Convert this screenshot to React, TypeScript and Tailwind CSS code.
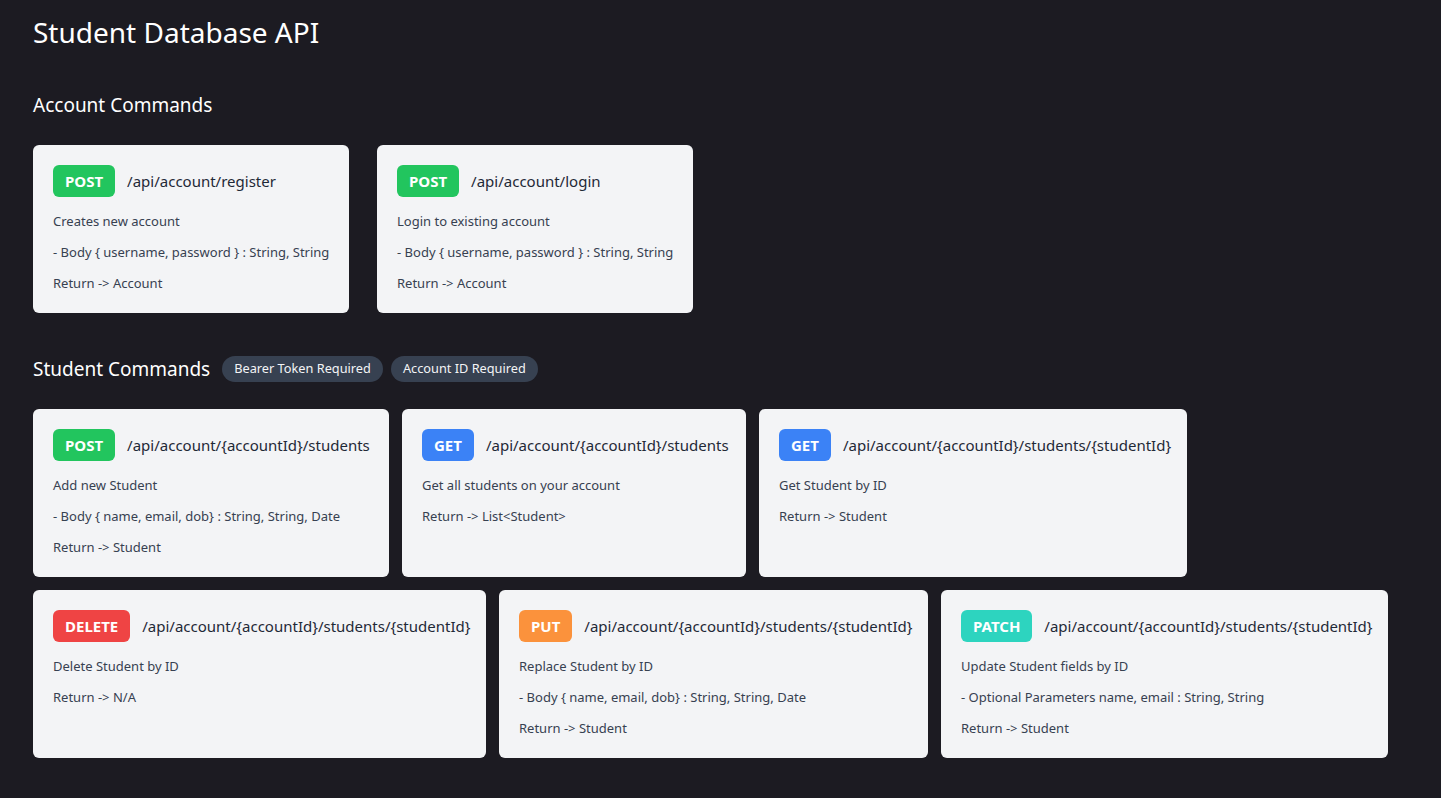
import React from "react";

type Card = {
  method: "POST" | "GET" | "DELETE" | "PUT" | "PATCH";
  path: string;
  lines: string[];
  w: string;
};

const badgeColor: Record<Card["method"], string> = {
  POST: "bg-[#22c55e]",
  GET: "bg-[#3b82f6]",
  DELETE: "bg-[#ef4444]",
  PUT: "bg-[#fb923c]",
  PATCH: "bg-[#2dd4bf]",
};

function ApiCard({ c }: { c: Card }) {
  return (
    <div className={`${c.w} rounded-md bg-[#f3f4f6] p-5 flex flex-col`}>
      <div className="flex items-center gap-3 h-8">
        <span
          className={`${badgeColor[c.method]} h-8 px-3 rounded-md flex items-center text-white font-bold text-[15px]`}
        >
          {c.method}
        </span>
        <span className="text-[15px] text-[#1f2937] whitespace-nowrap">{c.path}</span>
      </div>
      <div className="mt-[14px] flex flex-col gap-[11px]">
        {c.lines.map((l, i) => (
          <p key={i} className="text-[13px] leading-5 text-[#374151] whitespace-nowrap">
            {l}
          </p>
        ))}
      </div>
    </div>
  );
}

const account: Card[] = [
  {
    method: "POST",
    path: "/api/account/register",
    lines: ["Creates new account", "- Body { username, password } : String, String", "Return -> Account"],
    w: "w-[316px]",
  },
  {
    method: "POST",
    path: "/api/account/login",
    lines: ["Login to existing account", "- Body { username, password } : String, String", "Return -> Account"],
    w: "w-[316px]",
  },
];

const row1: Card[] = [
  {
    method: "POST",
    path: "/api/account/{accountId}/students",
    lines: ["Add new Student", "- Body { name, email, dob} : String, String, Date", "Return -> Student"],
    w: "w-[356px]",
  },
  {
    method: "GET",
    path: "/api/account/{accountId}/students",
    lines: ["Get all students on your account", "Return -> List<Student>"],
    w: "w-[344px]",
  },
  {
    method: "GET",
    path: "/api/account/{accountId}/students/{studentId}",
    lines: ["Get Student by ID", "Return -> Student"],
    w: "w-[428px]",
  },
];

const row2: Card[] = [
  {
    method: "DELETE",
    path: "/api/account/{accountId}/students/{studentId}",
    lines: ["Delete Student by ID", "Return -> N/A"],
    w: "w-[453px]",
  },
  {
    method: "PUT",
    path: "/api/account/{accountId}/students/{studentId}",
    lines: ["Replace Student by ID", "- Body { name, email, dob} : String, String, Date", "Return -> Student"],
    w: "w-[429px]",
  },
  {
    method: "PATCH",
    path: "/api/account/{accountId}/students/{studentId}",
    lines: ["Update Student fields by ID", "- Optional Parameters name, email : String, String", "Return -> Student"],
    w: "w-[447px]",
  },
];

export default function App() {
  return (
    <div
      className="min-h-screen bg-[#1c1b22] px-[33px] pt-[14px] pb-10"
      style={{ fontFamily: '"Noto Sans", "Open Sans", sans-serif' }}
    >
      <h1 className="text-[28px] leading-9 text-white">Student Database API</h1>

      <h2 className="mt-[41px] text-[19px] leading-7 text-white">Account Commands</h2>
      <div className="mt-[26px] flex gap-[28px]">
        {account.map((c, i) => (
          <ApiCard key={i} c={c} />
        ))}
      </div>

      <div className="mt-[42px] flex items-center h-7">
        <h2 className="text-[19px] leading-7 text-white">Student Commands</h2>
        <span className="ml-[12px] h-[26px] px-3 rounded-full bg-[#374151] text-[#f3f4f6] text-[12.75px] flex items-center">
          Bearer Token Required
        </span>
        <span className="ml-2 h-[26px] px-3 rounded-full bg-[#374151] text-[#f3f4f6] text-[12.75px] flex items-center">
          Account ID Required
        </span>
      </div>

      <div className="mt-[26px] flex flex-col gap-[13px]">
        <div className="flex gap-[13px]">
          {row1.map((c, i) => (
            <ApiCard key={i} c={c} />
          ))}
        </div>
        <div className="flex gap-[13px]">
          {row2.map((c, i) => (
            <ApiCard key={i} c={c} />
          ))}
        </div>
      </div>
    </div>
  );
}
